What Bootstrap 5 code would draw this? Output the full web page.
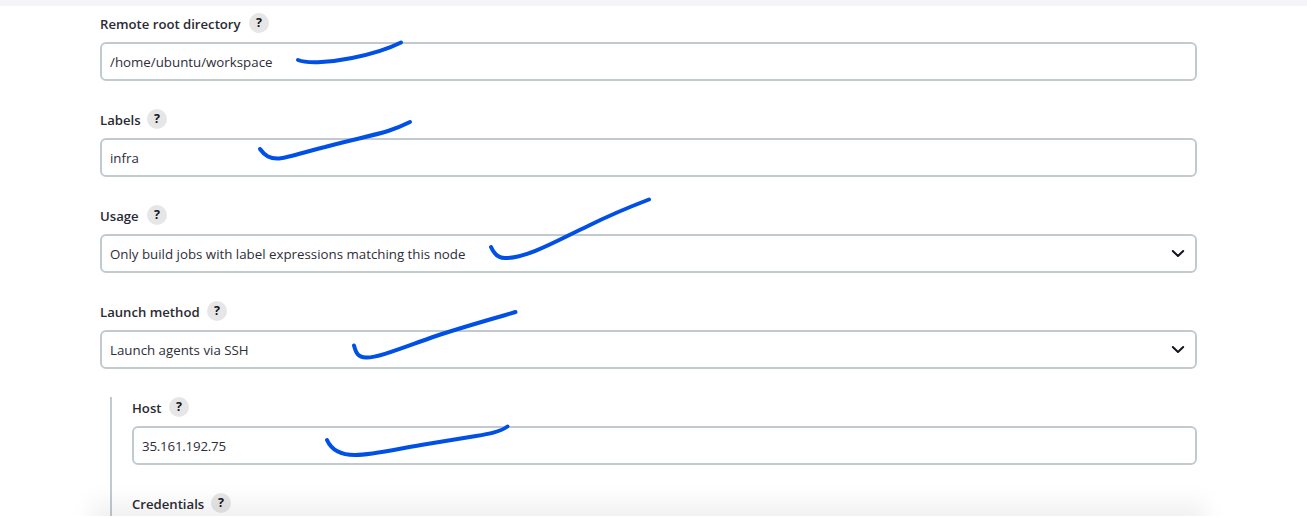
<!DOCTYPE html>
<html lang="en">
<head>
<meta charset="utf-8">
<meta name="viewport" content="width=device-width, initial-scale=1">
<title>Node configuration</title>
<link href="https://cdn.jsdelivr.net/npm/bootstrap@5.3.0/dist/css/bootstrap.min.css" rel="stylesheet">
<style>
body{font-family:"Open Sans","Noto Sans",sans-serif;font-size:13.3px;color:#14141f;background:#fff;height:518px;overflow:hidden}
.page{height:516px;padding-right:110px;padding-left:100px}
.topline{height:6px;background:#f5f5f7;margin:0 -110px 0 -100px}
.node-form{padding-top:7px}
.setting{height:96px}
.setting-head{height:20px;gap:8px}
.setting-head label{font-weight:600;color:#2a2a34;font-size:13.15px;line-height:20px;padding-top:1px;height:20px;white-space:nowrap}
.help{width:20px;height:20px;background:#e6e6e6;font-weight:700;font-size:12.5px;line-height:20px;text-decoration:none;color:#14141f}
.node-form .form-control,.node-form .form-select{height:39px;margin-top:9px;border:2px solid #c1cbcf;border-radius:6px;padding:1px 8px 0;font-size:13.3px;color:#2e2e37;line-height:20px;background-color:#fff}
.node-form .form-select{padding-left:8px;background-image:url("data:image/svg+xml,%3Csvg xmlns='http://www.w3.org/2000/svg' viewBox='0 0 16 16'%3E%3Cpath d='M2.8 5 8 10 13.2 5' fill='none' stroke='%2314141f' stroke-width='2' stroke-linecap='round' stroke-linejoin='round'/%3E%3C/svg%3E");background-size:16px;background-position:right 9px top 10px}
#host{letter-spacing:-.2px}
.nested{margin-left:10px;padding-left:20px;border-left:2px solid #c1cbcf;height:140px}
.w-remote{width:141px}.w-labels{width:39px}.w-usage{width:39px}.w-launch{width:99px}.w-host{width:29px}.w-cred{width:71px}
.footer-glow{left:92px;right:102px;top:502px;height:60px;background:rgba(0,0,0,.056);filter:blur(10px)}
.ticks{left:0;top:0;pointer-events:none}
</style>
</head>
<body>
<main class="page position-relative overflow-hidden">
<div class="topline"></div>
<form class="node-form">
<div class="setting"><div class="setting-head d-flex"><label class="w-remote" for="remote">Remote root directory</label><a class="help rounded-circle text-center">?</a></div><input id="remote" class="form-control" value="/home/ubuntu/workspace"></div>
<div class="setting"><div class="setting-head d-flex"><label class="w-labels" for="labels">Labels</label><a class="help rounded-circle text-center">?</a></div><input id="labels" class="form-control" value="infra"></div>
<div class="setting"><div class="setting-head d-flex"><label class="w-usage" for="usage">Usage</label><a class="help rounded-circle text-center">?</a></div><select id="usage" class="form-select"><option>Only build jobs with label expressions matching this node</option></select></div>
<div class="setting"><div class="setting-head d-flex"><label class="w-launch" for="launch">Launch method</label><a class="help rounded-circle text-center">?</a></div><select id="launch" class="form-select"><option>Launch agents via SSH</option></select></div>
<div class="nested">
<div class="setting"><div class="setting-head d-flex"><label class="w-host" for="host">Host</label><a class="help rounded-circle text-center">?</a></div><input id="host" class="form-control" value="35.161.192.75"></div>
<div class="setting"><div class="setting-head d-flex"><label class="w-cred">Credentials</label><a class="help rounded-circle text-center">?</a></div></div>
</div>
</form>
<div class="footer-glow position-absolute"></div>
<svg class="ticks position-absolute" width="1307" height="516" fill="none" stroke="#0050e6" stroke-width="4" stroke-linecap="round" stroke-linejoin="round">
<path d="M298 60C308 64 332 62 352 58C372 54 388 49 401 42.500"/>
<path d="M260 149C265 156 270 159 279 158.500C287 158 305 152 325 147C350 140 372 136 388 131C397 128 404 125 410 122"/>
<path d="M491 247C494 254 499 258.500 506 258C528 258 560 239 588 226C610 215 632 206 649 199.500"/>
<path d="M354 345.500C356 353 358 357.500 366 357.500C378 358 404 347 436 336C463 327 492 319 515.500 312"/>
<path d="M327 440C331 449 339 455 355 455C372 455 397 449 421 445L476 436C488 434 500 432 507.500 426.500"/>
</svg>
</main>
<script src="https://cdn.jsdelivr.net/npm/bootstrap@5.3.0/dist/js/bootstrap.bundle.min.js"></script>
</body>
</html>
